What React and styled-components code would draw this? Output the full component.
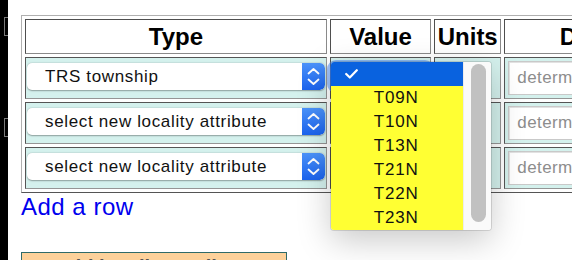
import React from "react";
import styled, { createGlobalStyle } from "styled-components";

const Global = createGlobalStyle`
  * { box-sizing: border-box; }
  html, body { margin: 0; padding: 0; background: #fff; overflow: hidden; }
  body { font-family: "Liberation Sans", Arial, Helvetica, sans-serif; }
`;

const Page = styled.div`
  display: flex;
  width: 572px;
  height: 260px;
  overflow: hidden;
`;

const LeftStrip = styled.div`
  flex: 0 0 8px;
  background: #000;
  display: flex;
  flex-direction: column;
  align-items: flex-end;
  padding-top: 17px;
  gap: 82px;
`;

const Bracket = styled.div`
  width: 4px;
  height: 19px;
  border: 1.5px solid #7a7a7a;
  border-right: none;
`;

const Main = styled.div`
  flex: 0 0 auto;
  padding: 15px 0 0 13px;
`;

const Table = styled.table`
  border-collapse: separate;
  border-spacing: 3px;
  border: 1px solid;
  border-color: #b0b0b0 #555 #555 #b0b0b0;
  table-layout: fixed;
  width: 725px;
`;

const Col = styled.col`
  width: ${(p) => p.$w}px;
`;

const Th = styled.th`
  height: 35px;
  padding: 1px;
  border: 1px solid;
  border-color: #4f4f4f #8a8a8a #8a8a8a #4f4f4f;
  font-size: 24px;
  font-weight: bold;
  color: #000;
  text-align: center;
  white-space: nowrap;
  overflow: hidden;
`;

const Td = styled.td`
  height: 42px;
  padding: ${(p) => (p.$input ? "3px 1px 2px" : "4px 1px 8px")};
  border: 1px solid;
  border-color: #555 #959595 #959595 #555;
  background: #d4f1ed;
  vertical-align: ${(p) => (p.$input ? "top" : "middle")};
  position: relative;
`;

const SelectBox = styled.div`
  display: flex;
  height: 27px;
  background: #fff;
  border-radius: 5px;
  box-shadow: 0 0.5px 1.5px rgba(0, 0, 0, 0.35);
  overflow: hidden;
`;

const SelectText = styled.div`
  flex: 1;
  padding-left: 18px;
  font-size: 17px;
  letter-spacing: 0.65px;
  line-height: 27px;
  color: #111;
  white-space: nowrap;
  overflow: hidden;
`;

const Stepper = styled.div`
  flex: 0 0 23px;
  background: linear-gradient(#4b93fa, #1b63ee);
  border-radius: 0 5px 5px 0;
  display: flex;
  align-items: center;
  justify-content: center;
`;

const FocusSelect = styled.div`
  height: 27px;
  margin: 0 -2px;
  border-radius: 6px;
  background: #3d7ee9;
  box-shadow: 0 0 0 3px rgba(80, 140, 240, 0.55);
`;

const TextInput = styled.div`
  height: 34px;
  margin: 0 1px 0 2px;
  background: #fff;
  border: 1px solid #c9c9c9;
  box-shadow: inset 0 1px 0 #e2e2e2, inset 1px 0 0 #e2e2e2;
  padding-left: 8px;
  font-size: 17px;
  letter-spacing: 0.4px;
  line-height: 32px;
  color: #8d8d8d;
  white-space: nowrap;
  overflow: hidden;
`;

const Popup = styled.div`
  position: absolute;
  top: 4px;
  left: 0;
  z-index: 10;
  width: 160px;
  height: 168px;
  display: flex;
  background: #fafafa;
  border-radius: 3px;
  box-shadow: 0 0 0 1px rgba(0, 0, 0, 0.12), 0 10px 34px rgba(0, 0, 0, 0.22);
  overflow: hidden;
`;

const OptionList = styled.div`
  flex: 0 0 132px;
  display: flex;
  flex-direction: column;
`;

const Option = styled.div`
  height: 24px;
  flex: 0 0 24px;
  display: flex;
  align-items: center;
  padding-left: ${(p) => (p.$selected ? "14px" : "43px")};
  background: ${(p) => (p.$selected ? "#0962df" : "#ffff33")};
  color: ${(p) => (p.$selected ? "#fff" : "#111")};
  font-size: 17px;
  letter-spacing: 0.8px;
`;

const ScrollTrack = styled.div`
  flex: 1;
  padding: 2px 5px 8px 7px;
  background: #fafafa;
  border-left: 1px solid #ececec;
`;

const ScrollThumb = styled.div`
  height: 100%;
  border-radius: 8px;
  background: #c1c1c1;
`;

const AddRow = styled.a`
  display: block;
  font-size: 24px;
  letter-spacing: 0.5px;
  line-height: 27px;
  color: #0000ee;
  text-decoration: none;
  cursor: pointer;
`;

const ActionBox = styled.div`
  margin-top: 32px;
  width: 266px;
  height: 40px;
  border: 1px solid #2f6a68;
  background: #fcd19a;
  padding-top: 2.5px;
  text-align: center;
  font-size: 20px;
  font-weight: bold;
  color: #555;
`;

const Chevrons = () => (
  <svg width="23" height="27" viewBox="0 0 23 27" fill="none">
    <path d="M6.5 10.5 L11.5 6 L16.5 10.5" stroke="#fff" strokeWidth="1.8" strokeLinecap="round" strokeLinejoin="round" />
    <path d="M6.5 16.5 L11.5 21 L16.5 16.5" stroke="#fff" strokeWidth="1.8" strokeLinecap="round" strokeLinejoin="round" />
  </svg>
);

const Check = () => (
  <svg width="13" height="10" viewBox="0 0 13 10" fill="none">
    <path d="M1.2 5 L4.8 8.5 L11.8 1.2" stroke="#fff" strokeWidth="2.2" strokeLinecap="round" strokeLinejoin="round" />
  </svg>
);

const FakeSelect = ({ label }) => (
  <SelectBox>
    <SelectText>{label}</SelectText>
    <Stepper>
      <Chevrons />
    </Stepper>
  </SelectBox>
);

const options = ["T09N", "T10N", "T13N", "T21N", "T22N", "T23N"];

const rows = ["TRS township", "select new locality attribute", "select new locality attribute"];

export default function App() {
  return (
    <>
      <Global />
      <Page>
        <LeftStrip>
          <Bracket />
          <Bracket />
        </LeftStrip>
        <Main>
          <Table>
            <colgroup>
              <Col $w={301} />
              <Col $w={101} />
              <Col $w={67} />
              <Col $w={237} />
            </colgroup>
            <thead>
              <tr>
                <Th>Type</Th>
                <Th>Value</Th>
                <Th>Units</Th>
                <Th>Determiner</Th>
              </tr>
            </thead>
            <tbody>
              {rows.map((label, i) => (
                <tr key={i}>
                  <Td>
                    <FakeSelect label={label} />
                  </Td>
                  <Td>
                    {i === 0 && (
                      <>
                        <FocusSelect />
                        <Popup>
                          <OptionList>
                            <Option $selected>
                              <Check />
                            </Option>
                            {options.map((o) => (
                              <Option key={o}>{o}</Option>
                            ))}
                          </OptionList>
                          <ScrollTrack>
                            <ScrollThumb />
                          </ScrollTrack>
                        </Popup>
                      </>
                    )}
                  </Td>
                  <Td />
                  <Td $input>
                    <TextInput>determiner</TextInput>
                  </Td>
                </tr>
              ))}
            </tbody>
          </Table>
          <AddRow>Add a row</AddRow>
          <ActionBox>Add locality attribute</ActionBox>
        </Main>
      </Page>
    </>
  );
}
